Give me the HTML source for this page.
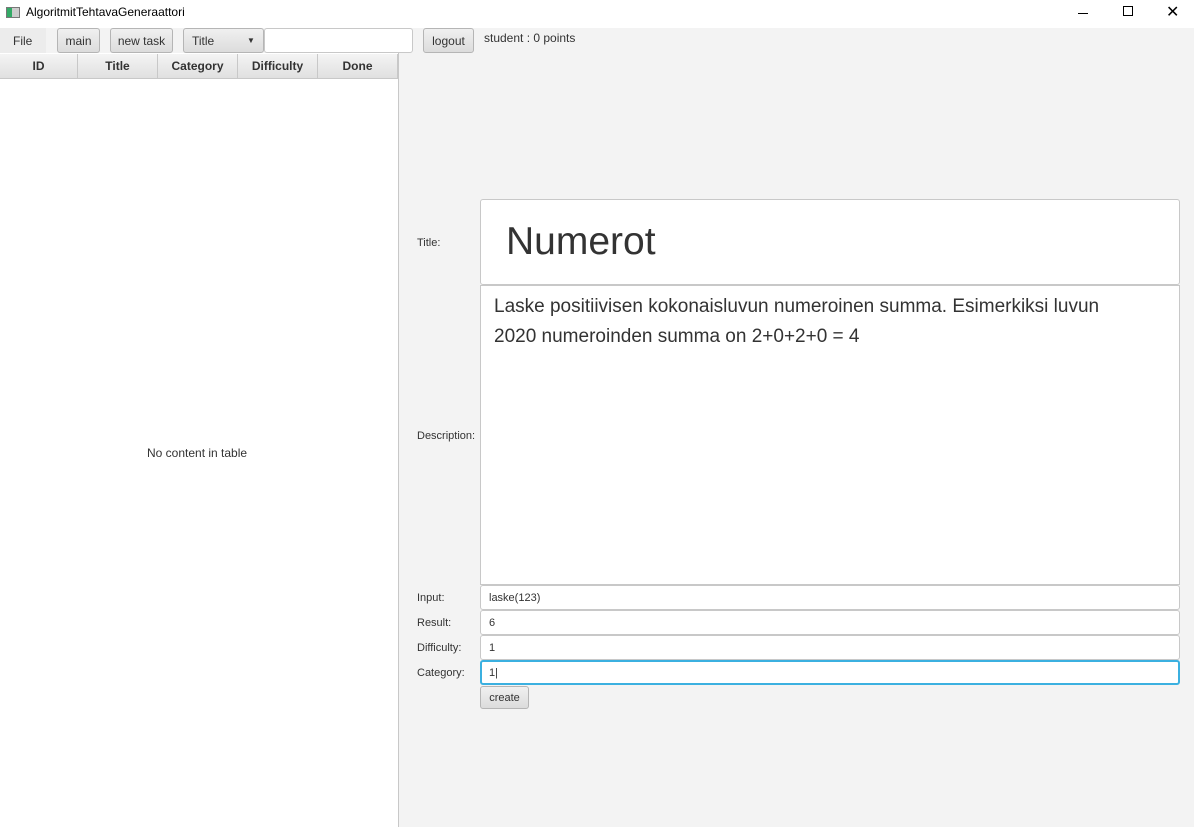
<!DOCTYPE html>
<html><head><style>
*{box-sizing:border-box;margin:0;padding:0}
body{width:1194px;height:827px;background:#f3f3f3;font-family:"Liberation Sans",sans-serif;font-size:12px;color:#333;position:relative;overflow:hidden}
.a{position:absolute}
.titlebar{left:0;top:0;width:1194px;height:28px;background:#fff}
.btn{position:absolute;border:1px solid #b5b5b5;border-radius:3px;background:linear-gradient(#f0f0f0,#dcdcdc);font-size:12px;text-align:center;line-height:22px;color:#333}
.tf{position:absolute;background:#fff;border:1px solid #c8c8c8;border-radius:3px;font-size:12px;padding-left:8px;line-height:22px;color:#333}
.lbl{position:absolute;left:417px;font-size:11px;color:#333}
.th{position:absolute;top:54px;height:24px;border-right:1px solid #c8c8c8;background:linear-gradient(#f4f4f4,#e0e0e0);font-weight:bold;font-size:12px;text-align:center;line-height:25px}
</style></head><body>
<div class="a titlebar"></div>
<div class="a" style="left:6px;top:7px;width:14px;height:11px;border:1px solid #777;background:linear-gradient(90deg,#3a6 0 40%,#ccc 40%)"></div>
<div class="a" style="left:26px;top:5px;font-size:12px;color:#000">AlgoritmitTehtavaGeneraattori</div>
<div class="a" style="left:1078px;top:13px;width:10px;height:1px;background:#000"></div>
<div class="a" style="left:1123px;top:6px;width:10px;height:10px;border:1px solid #000"></div>
<div class="a" style="left:1166px;top:2px;font-size:16px;color:#000">✕</div>
<div class="a" style="left:0;top:28px;width:46px;height:25px;background:#ececec"></div>
<div class="a" style="left:13px;top:34px">File</div>
<div class="btn" style="left:57px;top:28px;width:43px;height:25px;line-height:24px">main</div>
<div class="btn" style="left:110px;top:28px;width:63px;height:25px;line-height:24px">new task</div>
<div class="btn" style="left:183px;top:28px;width:81px;height:25px;text-align:left;padding-left:8px;line-height:24px">Title<span style="position:absolute;left:63px;top:0;font-size:8px">▼</span></div>
<div class="tf" style="left:264px;top:28px;width:149px;height:25px"></div>
<div class="btn" style="left:423px;top:28px;width:51px;height:25px;line-height:24px">logout</div>
<div class="a" style="left:484px;top:31px">student : 0 points</div>
<div class="a" style="left:0;top:53px;width:399px;height:774px;background:#fff;border-right:1px solid #c8c8c8"></div>
<div class="th" style="left:0;width:78px">ID</div>
<div class="th" style="left:78px;width:80px">Title</div>
<div class="th" style="left:158px;width:80px">Category</div>
<div class="th" style="left:238px;width:80px">Difficulty</div>
<div class="th" style="left:318px;width:80px">Done</div>
<div class="a" style="left:0;top:78px;width:398px;height:1px;background:#c8c8c8"></div>
<div class="a" style="left:147px;top:446px">No content in table</div>
<div class="lbl" style="top:237px">Title:</div>
<div class="tf" style="left:480px;top:199px;width:700px;height:86px;font-size:39px;line-height:84px;padding-left:25px">Numerot</div>
<div class="lbl" style="top:430px">Description:</div>
<div class="tf" style="left:480px;top:285px;width:700px;height:300px;font-size:19px;line-height:30px;padding:6px 50px 5px 13px;border-radius:0">Laske positiivisen kokonaisluvun numeroinen summa. Esimerkiksi luvun 2020 numeroinden summa on 2+0+2+0 = 4</div>
<div class="lbl" style="top:592px">Input:</div>
<div class="tf" style="left:480px;top:585px;width:700px;height:25px;font-size:11px;line-height:24px">laske(123)</div>
<div class="lbl" style="top:617px">Result:</div>
<div class="tf" style="left:480px;top:610px;width:700px;height:25px;font-size:11px;line-height:24px">6</div>
<div class="lbl" style="top:642px">Difficulty:</div>
<div class="tf" style="left:480px;top:635px;width:700px;height:25px;font-size:11px;line-height:24px">1</div>
<div class="lbl" style="top:667px">Category:</div>
<div class="tf" style="left:480px;top:660px;width:700px;height:25px;font-size:11px;border:2px solid #3bb0e0;padding-left:7px;line-height:22px">1|</div>
<div class="btn" style="left:480px;top:686px;width:49px;height:23px;font-size:11px;line-height:22px">create</div>
</body></html>
